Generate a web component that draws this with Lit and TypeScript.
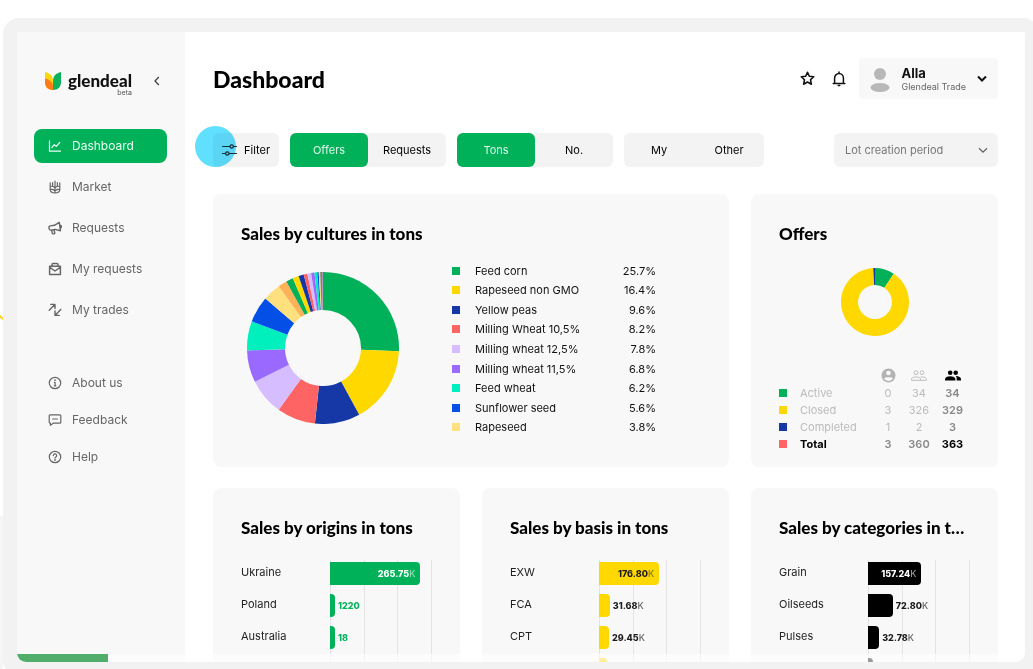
import { LitElement, html, svg, css, nothing } from "lit";
import { customElement, property } from "lit/decorators.js";
import { classMap } from "lit/directives/class-map.js";

type Slice = { value: number; color: string };

const GREEN = "#00b159";
const YELLOW = "#ffd800";
const NAVY = "#1538a6";
const CORAL = "#ff6464";
const LILAC = "#d5bdff";
const PURPLE = "#9a69ff";
const TEAL = "#00f0bd";
const BLUE = "#0450e6";
const SAND = "#ffe07f";
const ORANGE = "#ffb257";

const cultures = [
  { name: "Feed corn", value: 25.7, color: GREEN },
  { name: "Rapeseed non GMO", value: 16.4, color: YELLOW },
  { name: "Yellow peas", value: 9.6, color: NAVY },
  { name: "Milling Wheat 10,5%", value: 8.2, color: CORAL },
  { name: "Milling wheat 12,5%", value: 7.8, color: LILAC },
  { name: "Milling wheat 11,5%", value: 6.8, color: PURPLE },
  { name: "Feed wheat", value: 6.2, color: TEAL },
  { name: "Sunflower seed", value: 5.6, color: BLUE },
  { name: "Rapeseed", value: 3.8, color: SAND },
];

const minorCultures: Slice[] = [
  { value: 1.9, color: ORANGE },
  { value: 1.5, color: GREEN },
  { value: 1.3, color: YELLOW },
  { value: 1.1, color: NAVY },
  { value: 0.8, color: CORAL },
  { value: 0.8, color: LILAC },
  { value: 0.7, color: PURPLE },
  { value: 0.6, color: TEAL },
  { value: 0.3, color: BLUE },
  { value: 0.3, color: SAND },
  { value: 0.4, color: "#7f8a4e" },
  { value: 0.2, color: "#a58ac4" },
];

const offers = [
  { name: "Active", color: GREEN, cells: [0, 34, 34] },
  { name: "Closed", color: YELLOW, cells: [3, 326, 329] },
  { name: "Completed", color: NAVY, cells: [1, 2, 3] },
  { name: "Total", color: CORAL, cells: [3, 360, 363] },
];

const stroke = (body: unknown, size = 14) => html`<svg
  width=${size} height=${size} viewBox="0 0 14 14" fill="none" stroke="currentColor"
  stroke-width="1.2" stroke-linecap="round" stroke-linejoin="round" aria-hidden="true">${body}</svg>`;

const icons = {
  dashboard: stroke(svg`<path d="M1.500 1.800v10.400h11M3.800 8.600l2.400-2.900 2 1.700 3.600-3.900"/>`),
  market: stroke(svg`<path d="M7 1v12M2.200 2.800v6.800C2.200 11.800 4.200 13 7 13s4.800-1.200 4.800-3.400V2.800M2.200 6c2.600 0 4 .8 4.800 2 .8-1.200 2.200-2 4.800-2M2.200 9.200c2.600 0 4 .6 4.800 1.800.8-1.200 2.200-1.800 4.800-1.800M4.600 2.600v3.600M9.400 2.600v3.600"/>`),
  requests: stroke(svg`<path d="M11.300 1.400 6.400 4.300 2.300 4.900a1.500 1.500 0 0 0-1.300 1.800l.2 1.200a1.500 1.500 0 0 0 1.700 1.200l4.100-.7 5.400 1.300zM12.600 4.400c.9.500 1 1.800.2 2.500M3.600 9.200l.7 3.100a.8.800 0 0 0 .9.600l1-.2a.7.700 0 0 0 .5-.9L6 8.700" stroke-width="1.400"/>`),
  myRequests: stroke(svg`<path d="M1.600 4.200h10.800v8.200H1.600zM4 4V2.600a1 1 0 0 1 1-1h4a1 1 0 0 1 1 1V4M1.800 5.400 7 9l5.200-3.600" stroke-width="1.500"/>`),
  trades: stroke(svg`<path d="M1.200 7.200 6.800 1.600M2.800 1.400H7v4.200M12.800 6.400 7.200 12.200M7 8v4.400h4.200" stroke-width="1.400"/>`),
  about: stroke(svg`<circle cx="7" cy="7" r="5.700"/><path d="M6.400 6.400H7.100v3.400M6.300 9.800h1.600"/><circle cx="7" cy="4.200" r=".3"/>`),
  feedback: stroke(svg`<path d="M2.200 1.800h9.600a1 1 0 0 1 1 1v6.400a1 1 0 0 1-1 1H5.200L2.400 12.400V10.200a1.200 1.200 0 0 1-1.200-1.200V2.800a1 1 0 0 1 1-1zM4.600 6h4.800"/>`),
  help: stroke(svg`<circle cx="7" cy="7" r="5.700"/><path d="M5.300 5.600a1.700 1.700 0 1 1 2.500 1.500c-.5.300-.8.500-.8 1.100"/><circle cx="7" cy="10" r=".3"/>`),
  star: stroke(svg`<path d="m7 1.200 1.700 3.700 4.100.5-3 2.800.8 4.100L7 10.300l-3.600 2 .8-4.100-3-2.800 4.100-.5z" stroke-width="1.500"/>`, 15),
  bell: html`<svg width="14" height="16" viewBox="0 0 14 16" fill="none" stroke="currentColor" stroke-width="1.500" stroke-linejoin="round" stroke-linecap="round" aria-hidden="true">
    <path d="M1.200 12.400h11.600M2.600 12.400V7a4.400 4.400 0 0 1 8.800 0v5.400M7 1v1.200M6.200 14.600h1.600"/></svg>`,
};

@customElement("donut-chart")
export class DonutChart extends LitElement {
  @property({ attribute: false }) slices: Slice[] = [];

  static styles = css`
    :host { display: block; }
    svg { display: block; width: 100%; }
  `;

  private arc(from: number, to: number) {
    const at = (t: number, r: number) => {
      const a = t * 2 * Math.PI;
      return `${(50 + r * Math.sin(a)).toFixed(3)} ${(50 - r * Math.cos(a)).toFixed(3)}`;
    };
    const large = to - from > 0.5 ? 1 : 0;
    return `M${at(from, 50)}A50 50 0 ${large} 1 ${at(to, 50)}L${at(to, 25)}A25 25 0 ${large} 0 ${at(from, 25)}Z`;
  }

  render() {
    const total = this.slices.reduce((sum, s) => sum + s.value, 0);
    let start = 0;
    return html`<svg viewBox="0 0 100 100" aria-hidden="true">
      ${this.slices.map((s) => {
        const end = start + s.value / total;
        const d = this.arc(start, end);
        start = end;
        return svg`<path d=${d} fill=${s.color}/>`;
      })}
    </svg>`;
  }
}

type Bar = { name: string; value: number; text?: string; unit?: string; inside?: boolean };

@customElement("bar-chart")
export class BarChart extends LitElement {
  @property({ attribute: false }) bars: Bar[] = [];
  @property({ reflect: true }) tone = "green";

  /* Value, in thousands, at the last grid line. */
  private readonly max = 300;

  static styles = css`
    :host { display: block; --fill: #00b159; --ink: #00b159; --inner: #fff; --unit: #00b159; --inner-unit: #8fe0b5; }
    :host([tone="yellow"]) { --fill: #ffd800; --ink: #1a1a1a; --inner: #1a1a1a; --unit: #666; --inner-unit: #8f7b10; }
    :host([tone="black"]) { --fill: #000; --ink: #1a1a1a; --inner: #fff; --unit: #666; --inner-unit: #999; }
    .chart {
      display: grid; grid-template-columns: 89px minmax(0, 1fr); grid-template-rows: repeat(4, 23px);
      row-gap: 9px; padding-top: 2px;
    }
    .lines { grid-column: 2; grid-row: 1 / -1; display: flex; justify-content: space-between; margin-top: -2px; }
    .line { width: 1px; background: #e4e4e4; }
    .name { grid-column: 1; font-size: 11px; line-height: 21px; color: #222; }
    .track { grid-column: 2; display: flex; align-items: center; gap: 3px; white-space: nowrap; }
    .bar {
      flex: none; box-sizing: border-box; height: 23px; min-width: 5px; border-radius: 0 4px 4px 0; background: var(--fill);
      display: flex; align-items: center; justify-content: flex-end;
    }
    .value { font-size: 9px; font-weight: 800; color: var(--ink); }
    .unit { font-weight: 500; color: var(--unit); }
    .inner { color: var(--inner); padding-right: 5px; }
    .inner .unit { color: var(--inner-unit); }
  `;

  private label(b: Bar) {
    if (!b.text) return nothing;
    return html`<span class=${classMap({ value: true, inner: !!b.inside })}>${b.text}${b.unit ? html`<span class="unit">${b.unit}</span>` : nothing}</span>`;
  }

  render() {
    return html`<div class="chart">
      <div class="lines">${[0, 1, 2, 3].map(() => html`<span class="line"></span>`)}</div>
      ${this.bars.map(
        (b, i) => html`
          <span class="name" style="grid-row:${i + 1}">${b.name}</span>
          <div class="track" style="grid-row:${i + 1}">
            <div class="bar" style="width:${(b.value / this.max) * 100}%">${b.inside ? this.label(b) : nothing}</div>
            ${b.inside ? nothing : this.label(b)}
          </div>`
      )}
    </div>`;
  }
}

@customElement("side-nav")
export class SideNav extends LitElement {
  static styles = css`
    :host { display: block; box-sizing: border-box; width: 168px; flex: none; background: #f8f8f8; padding: 36px 18px 36px 17px; }
    .brand { display: flex; align-items: flex-start; padding: 0 6px 0 10px; height: 30px; }
    .mark { flex: none; margin-top: 3px; }
    .word { display: flex; flex-direction: column; align-items: flex-end; margin-left: 6px; }
    .name { font: 900 17px/26px Lato, sans-serif; color: #111; }
    .beta { font-size: 7px; line-height: 8px; margin-top: -5px; color: #555; }
    .collapse { border: 0; background: none; padding: 0; margin: 8px 0 0 auto; color: #444; display: flex; }
    .links { display: flex; flex-direction: column; gap: 7px; margin-top: 31px; }
    .more { gap: 3px; margin-top: 39px; }
    .link {
      display: flex; align-items: center; gap: 10px; box-sizing: border-box; height: 34px; padding: 0 14px 1px; border-radius: 8px;
      color: #666; font-size: 12px; text-decoration: none;
    }
    .current { background: #00b159; color: #e8fff3; }
  `;

  private link(icon: unknown, label: string, current = false) {
    return html`<a class=${classMap({ link: true, current })} href="#" aria-current=${current ? "page" : nothing}>${icon}<span>${label}</span></a>`;
  }

  render() {
    return html`
      <div class="brand">
        <svg class="mark" width="18" height="20" viewBox="0 0 18 20" aria-hidden="true">
          <path d="M1 1c5 1 8 4 8 9v9C4 19 1 16 1 11z" fill="#ffd60a"/>
          <path d="M1 7.500c5 1 8 4 8 8.500v3C4 19 1 16 1 11z" fill="#ff7a1a"/>
          <path d="M17 1c-5 1-8 4-8 9v9c5 0 8-3 8-8z" fill="#0db15c"/>
        </svg>
        <div class="word"><span class="name">glendeal</span><span class="beta">beta</span></div>
        <button class="collapse" aria-label="Collapse menu">
          <svg width="8" height="10" viewBox="0 0 8 10" fill="none" stroke="currentColor" stroke-width="1.300"><path d="M5.800 1 2 5l3.800 4"/></svg>
        </button>
      </div>
      <nav class="links">
        ${this.link(icons.dashboard, "Dashboard", true)} ${this.link(icons.market, "Market")}
        ${this.link(icons.requests, "Requests")} ${this.link(icons.myRequests, "My requests")}
        ${this.link(icons.trades, "My trades")}
      </nav>
      <nav class="links more">
        ${this.link(icons.about, "About us")} ${this.link(icons.feedback, "Feedback")} ${this.link(icons.help, "Help")}
      </nav>`;
  }
}

@customElement("app-root")
export class AppRoot extends LitElement {
  static styles = css`
    :host {
      display: block; position: relative; box-sizing: border-box; height: 100vh; overflow: hidden; padding: 18px 0 0 3px;
      background: #fff; color: #000; font-family: Inter, "Liberation Sans", sans-serif;
    }
    .edge { position: absolute; left: 0; bottom: 0; width: 3px; height: 153px; background: #f5f5f5; }
    .spark { position: absolute; left: 0; top: 314px; }
    .frame {
      position: relative; box-sizing: border-box; height: calc(100vh - 11px); margin-right: -6px; border: 14px solid #f2f2f2;
      border-radius: 16px; background: #f2f2f2;
    }
    .screen { position: relative; display: flex; height: 100%; overflow: hidden; border-radius: 2px 2px 9px 9px; background: #fff; }
    .main { flex: 1; min-width: 0; padding: 26px 27px 0 28px; }
    .header { display: flex; align-items: center; height: 41px; }
    .title { margin: 0; font: 900 23px/30px Lato, sans-serif; }
    .tools { display: flex; align-items: center; gap: 17px; margin-left: auto; }
    .icon { display: flex; border: 0; padding: 0; background: none; color: #111; }
    .user {
      display: flex; align-items: center; height: 41px; padding: 0 11px; border: 0; border-radius: 4px; background: #f8f8f8;
      font-family: inherit; text-align: left; margin-left: -4px;
    }
    .who { display: flex; flex-direction: column; margin: 0 11px; }
    .first { font-size: 13px; line-height: 16px; font-weight: 700; color: #111; }
    .firm { font-size: 9px; line-height: 12px; color: #666; }
    .toolbar { display: flex; align-items: center; gap: 11px; margin-top: 34px; }
    .filter, .group { height: 34px; border-radius: 6px; background: #f3f3f3; }
    .filter {
      position: relative; display: flex; align-items: center; padding: 0 9px; border: 0; font: 400 11px Inter, sans-serif; color: #000;
    }
    .sliders { margin-right: 7px; }
    .touch {
      position: absolute; left: -18px; top: -7px; width: 41px; height: 41px; border-radius: 50%; background: #60dfff; mix-blend-mode: multiply;
    }
    .group { display: flex; }
    .option { width: 78px; border: 0; padding: 0; background: none; border-radius: 6px; font: 400 11px Inter, sans-serif; color: #000; }
    .narrow .option { width: 70px; }
    .option.on { background: #00b159; color: #d9f9e8; }
    .period { position: relative; display: flex; align-items: center; margin-left: auto; }
    .select {
      appearance: none; width: 164px; height: 34px; border: 0; border-radius: 6px; padding: 0 11px; background: #f3f3f3;
      font: 400 11px Inter, sans-serif; color: #777;
    }
    .chevron { position: absolute; right: 10px; pointer-events: none; }
    .cards { display: grid; grid-template-columns: repeat(3, minmax(0, 1fr)); gap: 21px 22px; margin-top: 27px; }
    .card { box-sizing: border-box; padding: 29px 28px 15px; border-radius: 8px; background: #f8f8f8; }
    .wide { grid-column: span 2; }
    .heading { margin: 0; font: 900 17px/21px Lato, sans-serif; white-space: nowrap; overflow: hidden; text-overflow: ellipsis; }
    .cultures { display: flex; gap: 53px; margin-top: 17px; }
    .big { flex: none; width: 152px; padding: 11px 0 13px 6px; }
    .legend { display: grid; grid-auto-rows: 1fr; flex: 1; max-width: 204px; margin: 0; padding: 0; list-style: none; font-size: 11px; color: #111; }
    .entry { display: flex; align-items: center; }
    .swatch { display: block; flex: none; width: 8px; height: 8px; margin-right: 15px; }
    .share { margin-left: auto; }
    .small { width: 68px; margin: 24px auto 30px; }
    .stats { width: 100%; border-collapse: collapse; font-size: 11px; color: #bbb; table-layout: fixed; }
    .stats th, .stats td { padding: 0; height: 17px; font-weight: 400; text-align: center; }
    .stats thead th { height: 18px; }
    .stats svg { display: block; margin: 0 auto; }
    .stats .label { text-align: left; }
    .stats .sum { font-weight: 600; color: #888; }
    .stats .total th, .stats .total td { font-weight: 600; color: #888; }
    .stats .total .label, .stats .total .sum { font-weight: 700; color: #000; }
    .c-swatch { width: 21px; } .c-label { width: 73px; } .c-one { width: 30px; } .c-two { width: 32px; }
    bar-chart { margin-top: 22px; }
    .player { position: absolute; left: 0; right: 0; bottom: 0; height: 8px; background: rgba(255, 255, 255, 0.6); }
    .played { height: 100%; background: #51ae6a; }
  `;

  private option(label: string, on = false) {
    return html`<button class=${classMap({ option: true, on })} aria-pressed=${on ? "true" : "false"}>${label}</button>`;
  }

  render() {
    return html`
      <div class="edge"></div>
      <svg class="spark" width="4" height="8" viewBox="0 0 4 8" fill="none" stroke="#ffd21a" stroke-width="1.800" aria-hidden="true"><path d="M-1 1 5 7"/></svg>
      <div class="frame">
        <div class="screen">
          <side-nav></side-nav>
          <main class="main">
            <header class="header">
              <h1 class="title">Dashboard</h1>
              <div class="tools">
                <button class="icon" aria-label="Favourites">${icons.star}</button>
                <button class="icon" aria-label="Notifications">${icons.bell}</button>
                <button class="user">
                  <svg width="20" height="26" viewBox="0 0 20 26" fill="#b8b8b8" aria-hidden="true"><circle cx="10" cy="8" r="6"/><ellipse cx="10" cy="21.500" rx="9.500" ry="4.500"/></svg>
                  <span class="who"><span class="first">Alla</span><span class="firm">Glendeal Trade</span></span>
                  <svg width="10" height="8" viewBox="0 0 10 8" fill="none" stroke="#111" stroke-width="2" aria-hidden="true"><path d="m1 1.500 4 4 4-4"/></svg>
                </button>
              </div>
            </header>
            <div class="toolbar">
              <button class="filter">
                <svg class="sliders" width="15" height="14" viewBox="0 0 15 14" fill="none" stroke="#333" stroke-width="1.200" aria-hidden="true">
                  <path d="M0 3.500h8M11.500 3.500H15M0 10.500h3.500M7 10.500h8"/><circle cx="9.700" cy="3.500" r="1.700"/><circle cx="5.300" cy="10.500" r="1.700"/>
                </svg>
                <span>Filter</span><span class="touch"></span>
              </button>
              <div class="group" role="group">${this.option("Offers", true)}${this.option("Requests")}</div>
              <div class="group" role="group">${this.option("Tons", true)}${this.option("No.")}</div>
              <div class="group narrow" role="group">${this.option("My")}${this.option("Other")}</div>
              <div class="period">
                <select class="select" aria-label="Lot creation period"><option>Lot creation period</option></select>
                <svg class="chevron" width="10" height="7" viewBox="0 0 10 7" fill="none" stroke="#666" stroke-width="1.300" aria-hidden="true"><path d="m1 1.200 4 4 4-4"/></svg>
              </div>
            </div>
            <div class="cards">
              <section class="card wide">
                <h2 class="heading">Sales by cultures in tons</h2>
                <div class="cultures">
                  <donut-chart class="big" .slices=${[...cultures, ...minorCultures]}></donut-chart>
                  <ul class="legend">
                    ${cultures.map((c) => html`<li class="entry">
                      <span class="swatch" style="background:${c.color}"></span><span>${c.name}</span><span class="share">${c.value}%</span>
                    </li>`)}
                  </ul>
                </div>
              </section>
              <section class="card">
                <h2 class="heading">Offers</h2>
                <donut-chart class="small" .slices=${offers.slice(0, 3).map((o) => ({ value: o.cells[2], color: o.color }))}></donut-chart>
                <table class="stats">
                  <colgroup><col class="c-swatch"><col class="c-label"><col class="c-one"><col class="c-two"><col></colgroup>
                  <thead><tr><td colspan="2"></td>
                    <th scope="col" aria-label="Mine"><svg width="15" height="15" viewBox="0 0 15 15"><circle cx="7.500" cy="7.500" r="7" fill="#b3b3b3"/><circle cx="7.500" cy="5" r="2.300" fill="#f8f8f8"/><path d="M3 10.600c.7-1.800 8.300-1.800 9 0-1.200 1.600-2.700 2.300-4.500 2.300S4.200 12.200 3 10.600z" fill="#f8f8f8"/></svg></th>
                    <th scope="col" aria-label="Others"><svg width="16" height="11" viewBox="0 0 16 11" fill="none" stroke="#bdbdbd"><circle cx="5" cy="2.700" r="1.900"/><circle cx="11" cy="2.700" r="1.900"/><path d="M.6 10.300V8.600C1.500 6.500 8.500 6.500 9.600 8.600v1.700zM9.600 7.200c2-.6 5-.2 5.800 1.400v1.700H9.600"/></svg></th>
                    <th scope="col" aria-label="All"><svg width="16" height="11" viewBox="0 0 16 11" fill="#000"><circle cx="5.200" cy="2.700" r="2.300"/><circle cx="10.700" cy="2.700" r="2.300"/><path d="M0 10.500V8.700C1 5.400 9.400 5.400 10.400 8.700v1.800zM10.800 6.100c2.200-.1 4.600.8 5.200 2.600v1.800h-4.300V8.700c0-1-.4-1.900-.9-2.600z"/></svg></th>
                  </tr></thead>
                  <tbody>
                    ${offers.map((o) => html`<tr class=${classMap({ total: o.name === "Total" })}>
                      <td><span class="swatch" style="background:${o.color}"></span></td>
                      <th class="label" scope="row">${o.name}</th>
                      <td>${o.cells[0]}</td><td>${o.cells[1]}</td><td class="sum">${o.cells[2]}</td>
                    </tr>`)}
                  </tbody>
                </table>
              </section>
              <section class="card">
                <h2 class="heading">Sales by origins in tons</h2>
                <bar-chart .bars=${[
                  { name: "Ukraine", value: 265.75, text: "265.75", unit: "K", inside: true },
                  { name: "Poland", value: 1.22, text: "1220" },
                  { name: "Australia", value: 0.018, text: "18" },
                ]}></bar-chart>
              </section>
              <section class="card">
                <h2 class="heading">Sales by basis in tons</h2>
                <bar-chart tone="yellow" .bars=${[
                  { name: "EXW", value: 176.8, text: "176.80", unit: "K", inside: true },
                  { name: "FCA", value: 31.68, text: "31.68", unit: "K" },
                  { name: "CPT", value: 29.45, text: "29.45", unit: "K" },
                  { name: "", value: 24 },
                ]}></bar-chart>
              </section>
              <section class="card">
                <h2 class="heading">Sales by categories in tons</h2>
                <bar-chart tone="black" .bars=${[
                  { name: "Grain", value: 157.24, text: "157.24", unit: "K", inside: true },
                  { name: "Oilseeds", value: 72.8, text: "72.80", unit: "K" },
                  { name: "Pulses", value: 32.78, text: "32.78", unit: "K" },
                  { name: "", value: 12 },
                ]}></bar-chart>
              </section>
            </div>
          </main>
          <div class="player"><div class="played" style="width:9%"></div></div>
        </div>
      </div>`;
  }
}
